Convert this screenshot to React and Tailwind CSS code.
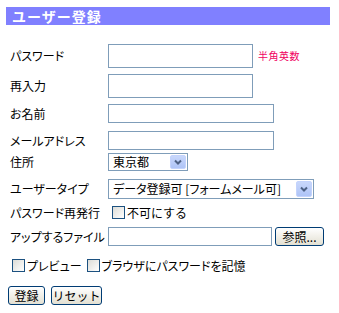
import React from "react";

const font = "font-['Noto_Sans_CJK_JP','Noto_Sans',sans-serif]";

function Input({ w, h }) {
  return <div className={`border border-[#7f9db9] bg-white box-border`} style={{ width: w, height: h }} />;
}

function Check() {
  return (
    <div className="w-[13px] h-[13px] shrink-0 border border-[#1c5180] bg-linear-to-br from-[#dcdcd7] to-white box-border" />
  );
}

function Select({ w, text }) {
  return (
    <div className="relative border border-[#7f9db9] bg-white box-border flex items-center h-full" style={{ width: w }}>
      <span className="pl-[4px] text-[12px] leading-none text-black whitespace-nowrap [font-feature-settings:'palt']">{text}</span>
      <div className="absolute right-[1px] top-[1px] bottom-[1px] w-[16px] rounded-[2px] border border-[#c3d3fd] bg-linear-to-b from-[#c8d7fb] to-[#aec4f7] flex items-center justify-center">
        <svg width="8" height="6" viewBox="0 0 8 6">
          <path d="M1 1.5 L4 4.5 L7 1.5" stroke="#4d6185" strokeWidth="2" fill="none" />
        </svg>
      </div>
    </div>
  );
}

function Btn({ children, w }) {
  return (
    <div
      className="h-[19px] box-border border border-[#003c74] rounded-[3px] bg-linear-to-b from-white to-[#e3e0d2] flex items-center justify-center text-[12px] leading-none text-black"
      style={{ width: w }}
    >
      {children}
    </div>
  );
}

function Row({ label, h, mt, children }) {
  return (
    <div className={`flex items-center pl-[10px] ${mt}`} style={{ height: h }}>
      <div className="w-[98px] shrink-0 text-[12px] leading-none text-black whitespace-nowrap [font-feature-settings:'palt']">{label}</div>
      {children}
    </div>
  );
}

export default function App() {
  return (
    <div className={`w-[339px] h-[313px] bg-white ${font} overflow-hidden`}>
      <div className="pt-[7px] pl-[6px]">
        <div className="w-[324px] h-[18px] bg-[#8080ff] flex items-center pl-[6px]">
          <span className="text-white font-bold text-[14px] leading-none tracking-[1px]">ユーザー登録</span>
        </div>
      </div>

      <Row label="パスワード" h={24} mt="mt-[19px]">
        <Input w={145} h={24} />
        <span className="ml-[5px] text-[10px] leading-none text-[#f00060] tracking-[0.5px]">半角英数</span>
      </Row>
      <Row label="再入力" h={24} mt="mt-[6px]">
        <Input w={145} h={24} />
      </Row>
      <Row label="お名前" h={19} mt="mt-[6px]">
        <Input w={166} h={19} />
      </Row>
      <Row label="メールアドレス" h={19} mt="mt-[8px]">
        <Input w={166} h={19} />
      </Row>
      <Row label="住所" h={18} mt="mt-[3px]">
        <Select w={80} text="東京都" />
      </Row>
      <Row label="ユーザータイプ" h={20} mt="mt-[8px]">
        <Select w={206} text="データ登録可 [フォームメール可]" />
      </Row>
      <Row label="パスワード再発行" h={13} mt="mt-[7px]">
        <div className="ml-[4px] flex items-center">
          <Check />
          <span className="ml-[2px] text-[12px] leading-none">不可にする</span>
        </div>
      </Row>
      <Row label="アップするファイル" h={19} mt="mt-[8px]">
        <Input w={164} h={19} />
        <div className="ml-[3px]">
          <Btn w={49}>参照...</Btn>
        </div>
      </Row>
      <div className="flex items-center pl-[12px] mt-[13px] h-[13px] text-[12px] leading-none [font-feature-settings:'palt']">
        <Check />
        <span className="ml-[2px]">プレビュー</span>
        <div className="ml-[5px]"><Check /></div>
        <span className="ml-[2px]">ブラウザにパスワードを記憶</span>
      </div>
      <div className="flex items-center pl-[8px] mt-[14px] gap-[6px]">
        <Btn w={37}>登録</Btn>
        <Btn w={51}>リセット</Btn>
      </div>
    </div>
  );
}
